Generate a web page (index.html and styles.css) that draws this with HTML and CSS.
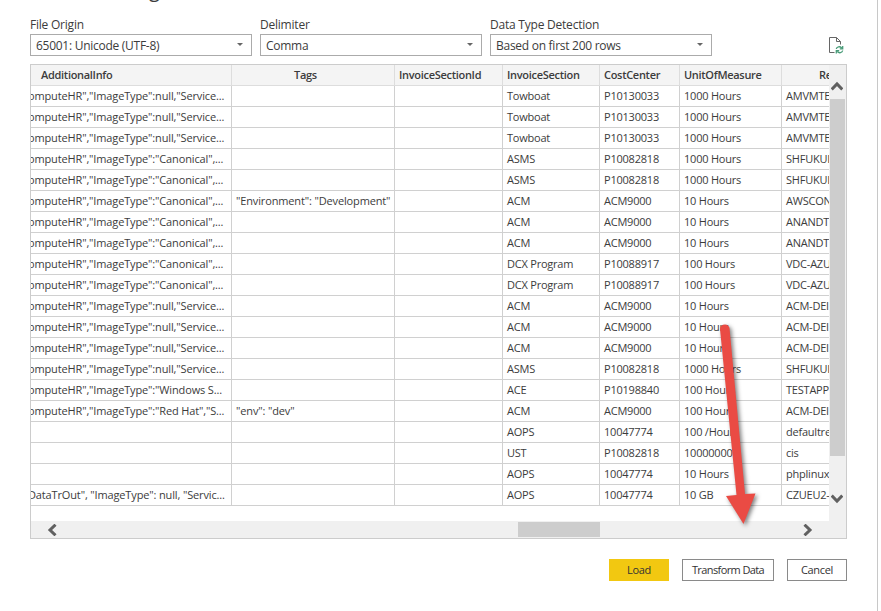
FILE: index.html
```
<!DOCTYPE html>
<html lang="en">
<head>
<meta charset="utf-8">
<title>CSV import preview</title>
<link rel="stylesheet" href="styles.css">
</head>
<body>
<main class="dialog">
  <header class="title">g</header>
  <section class="options">
    <div class="field"><label>File Origin</label><div class="select"><span>65001: Unicode (UTF-8)</span><i class="caret"></i></div></div>
    <div class="field"><label>Delimiter</label><div class="select"><span>Comma</span><i class="caret"></i></div></div>
    <div class="field"><label>Data Type Detection</label><div class="select"><span>Based on first 200 rows</span><i class="caret"></i></div></div>
    <svg class="refresh" width="16" height="18" viewBox="0 0 16 18" fill="none">
      <path d="M6.500 15.500H1.500V.500H8.500L12.500 4.500V7.500M8.500 .500V4.500H12.500" stroke="#666"/>
      <path d="M8.300 12C8.600 9.500 12 9 13.800 11M14.700 9V11.800H11.800M14.700 13.500C14.300 16 11 16.500 9.300 14.500M8.300 16.500V13.700H11.200" stroke="#4a9c79" stroke-width="1.300"/>
    </svg>
  </section>
  <section class="preview">
    <div class="body">
      <table>
        <colgroup><col class="c1"><col class="c2"><col class="c3"><col class="c4"><col class="c5"><col class="c6"><col class="c7"></colgroup>
        <thead><tr><th class="h1">AdditionalInfo</th><th class="h2">Tags</th><th>InvoiceSectionId</th><th>InvoiceSection</th><th>CostCenter</th><th>UnitOfMeasure</th><th class="h7">Re</th></tr></thead>
        <tbody>
          <tr><td>omputeHR","ImageType":null,"Service...</td><td></td><td></td><td>Towboat</td><td>P10130033</td><td>1000 Hours</td><td>AMVMTE</td></tr>
          <tr><td>omputeHR","ImageType":null,"Service...</td><td></td><td></td><td>Towboat</td><td>P10130033</td><td>1000 Hours</td><td>AMVMTE</td></tr>
          <tr><td>omputeHR","ImageType":null,"Service...</td><td></td><td></td><td>Towboat</td><td>P10130033</td><td>1000 Hours</td><td>AMVMTE</td></tr>
          <tr><td>omputeHR","ImageType":"Canonical",...</td><td></td><td></td><td>ASMS</td><td>P10082818</td><td>1000 Hours</td><td>SHFUKUI</td></tr>
          <tr><td>omputeHR","ImageType":"Canonical",...</td><td></td><td></td><td>ASMS</td><td>P10082818</td><td>1000 Hours</td><td>SHFUKUI</td></tr>
          <tr><td>omputeHR","ImageType":"Canonical",...</td><td>"Environment": "Development"</td><td></td><td>ACM</td><td>ACM9000</td><td>10 Hours</td><td>AWSCON</td></tr>
          <tr><td>omputeHR","ImageType":"Canonical",...</td><td></td><td></td><td>ACM</td><td>ACM9000</td><td>10 Hours</td><td>ANANDT</td></tr>
          <tr><td>omputeHR","ImageType":"Canonical",...</td><td></td><td></td><td>ACM</td><td>ACM9000</td><td>10 Hours</td><td>ANANDT</td></tr>
          <tr><td>omputeHR","ImageType":"Canonical",...</td><td></td><td></td><td>DCX Program</td><td>P10088917</td><td>100 Hours</td><td>VDC-AZU</td></tr>
          <tr><td>omputeHR","ImageType":"Canonical",...</td><td></td><td></td><td>DCX Program</td><td>P10088917</td><td>100 Hours</td><td>VDC-AZU</td></tr>
          <tr><td>omputeHR","ImageType":null,"Service...</td><td></td><td></td><td>ACM</td><td>ACM9000</td><td>10 Hours</td><td>ACM-DEI</td></tr>
          <tr><td>omputeHR","ImageType":null,"Service...</td><td></td><td></td><td>ACM</td><td>ACM9000</td><td>10 Hours</td><td>ACM-DEI</td></tr>
          <tr><td>omputeHR","ImageType":null,"Service...</td><td></td><td></td><td>ACM</td><td>ACM9000</td><td>10 Hours</td><td>ACM-DEI</td></tr>
          <tr><td>omputeHR","ImageType":null,"Service...</td><td></td><td></td><td>ASMS</td><td>P10082818</td><td>1000 Hours</td><td>SHFUKUI</td></tr>
          <tr><td>omputeHR","ImageType":"Windows S...</td><td></td><td></td><td>ACE</td><td>P10198840</td><td>100 Hours</td><td>TESTAPP</td></tr>
          <tr><td>omputeHR","ImageType":"Red Hat","S...</td><td>"env": "dev"</td><td></td><td>ACM</td><td>ACM9000</td><td>100 Hours</td><td>ACM-DEI</td></tr>
          <tr><td></td><td></td><td></td><td>AOPS</td><td>10047774</td><td>100 /Hour</td><td>defaultre</td></tr>
          <tr><td></td><td></td><td></td><td>UST</td><td>P10082818</td><td>10000000</td><td>cis</td></tr>
          <tr><td></td><td></td><td></td><td>AOPS</td><td>10047774</td><td>10 Hours</td><td>phplinux</td></tr>
          <tr><td>DataTrOut", "ImageType": null, "Servic...</td><td></td><td></td><td>AOPS</td><td>10047774</td><td>10 GB</td><td>CZUEU2-</td></tr>
        </tbody>
      </table>
      <div class="vbar">
        <svg width="12" height="10" viewBox="0 0 12 10"><path d="M.700 8.500L6 3L11.300 8.500" /></svg>
        <div class="vthumb"></div>
        <svg class="down" width="12" height="10" viewBox="0 0 12 10"><path d="M.700 1.500L6 7L11.300 1.500" /></svg>
      </div>
    </div>
    <div class="hbar">
      <svg class="left" width="10" height="12" viewBox="0 0 10 12"><path d="M8.500 .700L3 6L8.500 11.300" /></svg>
      <div class="hthumb"></div>
      <svg class="right" width="10" height="12" viewBox="0 0 10 12"><path d="M1.500 .700L7 6L1.500 11.300" /></svg>
    </div>
  </section>
  <footer class="actions">
    <button class="primary">Load</button>
    <button class="wide">Transform Data</button>
    <button>Cancel</button>
  </footer>
  <svg class="arrow" width="50" height="220" viewBox="710 315 50 220">
    <path d="M720 329Q720.500 324.500 725 324.500Q728.500 324.500 729.500 328L745 494L755.500 493.500L743.500 524L726 496L736.500 495Z"/>
  </svg>
</main>
</body>
</html>
```
FILE: styles.css
```
* { box-sizing: border-box; }
body { margin: 0; background: #fff; color: #3c3c3c; font-family: "Open Sans", "Noto Sans", sans-serif; }
.dialog { position: relative; width: 878px; height: 611px; overflow: hidden; border-right: 1px solid #c8c8c8; padding-left: 30px; }
.title { padding-left: 119px; font-size: 20px; line-height: 20px; margin-top: -20px; height: 36px; }
.options { display: flex; gap: 8px; height: 48px; }
.field { width: 222px; }
.field label { display: block; height: 18px; line-height: 18px; font-size: 12px; letter-spacing: -0.22px; }
.select { display: flex; align-items: center; justify-content: space-between; height: 22px; border: 1px solid #ababab; padding: 0 8px 0 5px; font-size: 12px; letter-spacing: -0.27px; }
.caret { border: 3px solid transparent; border-top-color: #666; border-bottom: 0; margin-top: -1px; }
.refresh { margin: 21px 0 0 108px; flex: none; }
.preview { width: 817px; height: 475px; border: 1px solid #ccc; }
.body { display: flex; height: 456px; overflow: hidden; }
table { table-layout: fixed; border-collapse: separate; border-spacing: 0; width: 798px; height: 441px; flex: none; }
.c1 { width: 201px; } .c2 { width: 163px; } .c3 { width: 108px; } .c4 { width: 97px; } .c5 { width: 80px; } .c6 { width: 102px; } .c7 { width: 47px; }
th, td { height: 21px; padding: 0 0 0 4px; border: solid #d0d0d0; border-width: 0 1px 1px 0; font-size: 11px; line-height: 18px; text-align: left; white-space: nowrap; overflow: hidden; letter-spacing: -0.22px; }
th:last-child, td:last-child { border-right: 0; }
th { background: #f4f4f4; border-color: #ddd; font-weight: 600; letter-spacing: -0.3px; }
th.h1 { padding-left: 10px; } th.h2 { padding-left: 62px; } th.h7 { padding-left: 37px; }
td:first-child { padding-left: 0; text-indent: -3px; letter-spacing: -0.14px; }
td:nth-child(2) { letter-spacing: -0.14px; }
.vbar { width: 17px; background: #f0f0f0; padding: 16px 1px 0; flex: none; }
.vbar svg { display: block; margin: 0 0 0 1px; }
.vthumb { height: 357px; margin-top: 8px; background: #cdcdcd; }
.vbar .down { margin-top: 38px; }
.hbar { display: flex; height: 17px; background: #f0f0f0; padding-top: 1px; }
.hthumb { width: 82px; height: 15px; margin-left: 461px; background: #cdcdcd; }
.hbar svg { margin-top: 2px; }
.hbar .left { margin-left: 16px; }
.hbar .right { margin-left: 203px; }
.vbar path, .hbar path { fill: none; stroke: #606060; stroke-width: 3; }
.actions { display: flex; justify-content: flex-end; gap: 13px; width: 817px; margin-top: 20px; }
button { width: 60px; height: 22px; padding: 0 0 1px; border: 1px solid #8a8a8a; background: #fff; color: #333; font: 11px "Open Sans", "Noto Sans", sans-serif; letter-spacing: -0.3px; }
button.primary { background: #f2c811; border-color: #f2c811; }
button.wide { width: 92px; letter-spacing: -0.6px; }
.arrow { position: absolute; left: 710px; top: 315px; filter: drop-shadow(2px 2px 2px rgba(0, 0, 0, .5)); }
.arrow path { fill: #ea4b44; }
```
